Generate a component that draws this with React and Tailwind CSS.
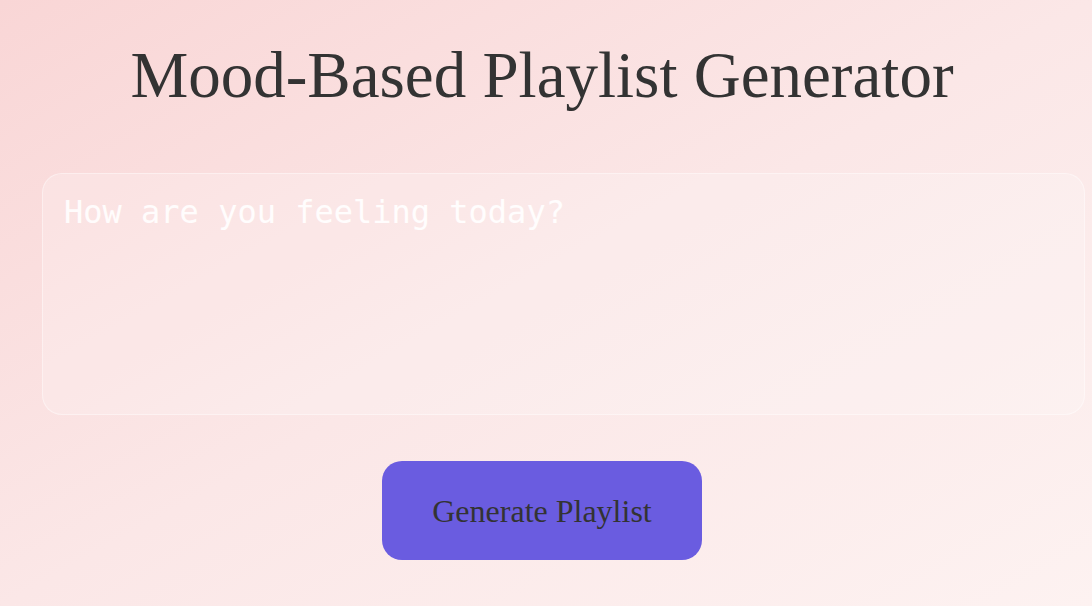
import React, { useState } from "react";

const serif = { fontFamily: '"Liberation Serif", "DejaVu Serif", serif' };

const App = () => {
  const [mood, setMood] = useState("");

  return (
    <div className="min-h-screen w-full overflow-hidden bg-gradient-to-br from-[#f9d6d6] via-[#fbe7e7] to-[#fdf2f1]">
      <div className="ml-[42px] w-[1000px] pt-[37px]">
        <h1
          className="text-center text-[65px] leading-[76px] text-[#333333] mb-[60px] whitespace-nowrap"
          style={serif}
        >
          Mood-Based Playlist Generator
        </h1>
        <textarea
          value={mood}
          onChange={(e) => setMood(e.target.value)}
          placeholder="How are you feeling today?"
          className="block w-[1043px] h-[242px] resize-none rounded-[20px] border border-white/40 bg-white/20 px-[21px] py-[18px] text-[32px] leading-[40px] text-[#333] placeholder:text-white/90 outline-none"
          style={{ fontFamily: '"DejaVu Sans Mono", monospace' }}
        />
        <div className="flex justify-center mt-[46px]">
          <button
            className="w-[320px] h-[99px] rounded-[20px] bg-[#6a5ce0] text-[32px] text-[#333333]"
            style={serif}
          >
            Generate Playlist
          </button>
        </div>
      </div>
    </div>
  );
};

export default App;
